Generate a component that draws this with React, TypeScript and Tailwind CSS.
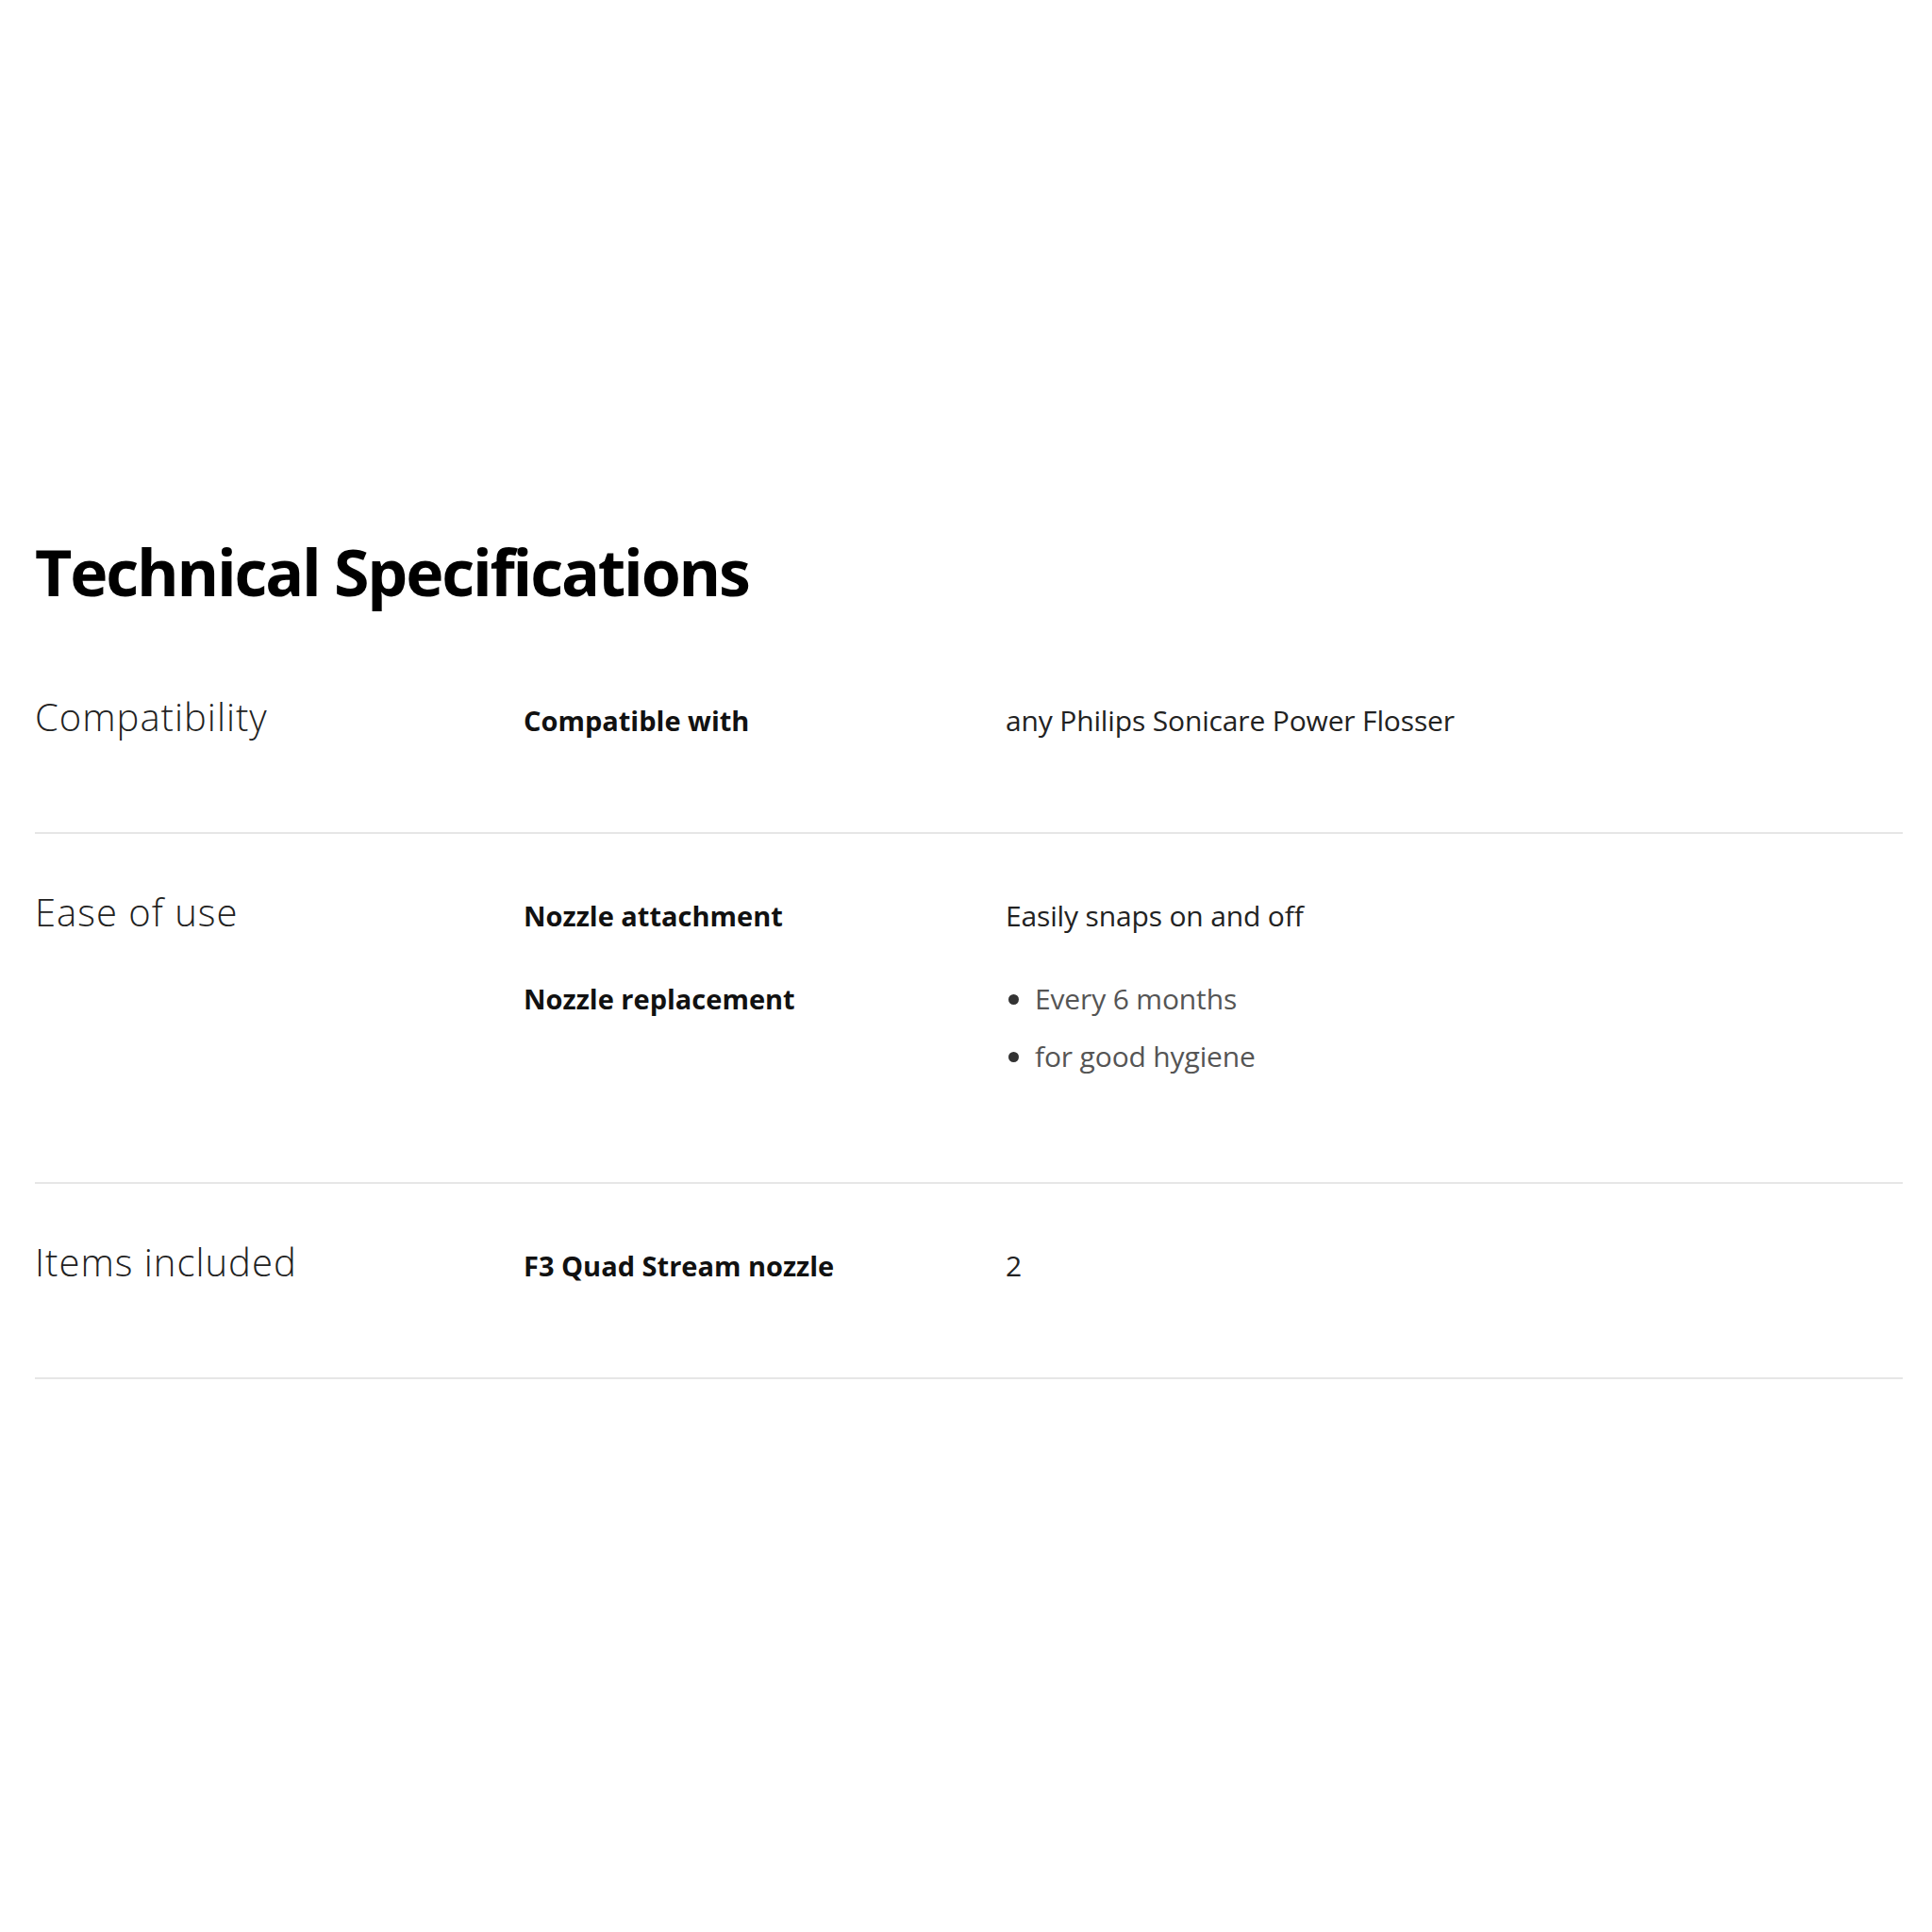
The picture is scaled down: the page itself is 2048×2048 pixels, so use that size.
type Pair = { key: string; value?: string; bullets?: string[] };
type Section = { title: string; pairs: Pair[] };

const sections: Section[] = [
  {
    title: 'Compatibility',
    pairs: [{ key: 'Compatible with', value: 'any Philips Sonicare Power Flosser' }],
  },
  {
    title: 'Ease of use',
    pairs: [
      { key: 'Nozzle attachment', value: 'Easily snaps on and off' },
      { key: 'Nozzle replacement', bullets: ['Every 6 months', 'for good hygiene'] },
    ],
  },
  {
    title: 'Items included',
    pairs: [{ key: 'F3 Quad Stream nozzle', value: '2' }],
  },
];

const SpecRow = ({ section }: { section: Section }) => (
  <div className="flex items-baseline pt-[55px] pb-[94px] border-b-2 border-[#e6e6e6]">
    <h3 className="w-[518px] shrink-0 text-[40px] leading-[56px] font-light text-[#222] tracking-[1px]">
      {section.title}
    </h3>
    <div className="flex flex-col gap-[44px] flex-1">
      {section.pairs.map((p) => (
        <div key={p.key} className="flex items-baseline">
          <div className="w-[511px] shrink-0 text-[29px] leading-[44px] font-bold text-[#111] tracking-[0px]">
            {p.key}
          </div>
          {p.value && (
            <div className="flex-1 text-[30px] leading-[44px] text-[#222] tracking-[-0.15px]">{p.value}</div>
          )}
          {p.bullets && (
            <ul className="flex-1">
              {p.bullets.map((b) => (
                <li key={b} className="block mb-[17px] text-[30px] leading-[44px] text-[#555] tracking-[-0.15px]">
                  <span className="inline-block align-middle ml-[3px] mr-[17px] mb-[4px] w-[11px] h-[11px] rounded-full bg-[#333]" />
                  {b}
                </li>
              ))}
            </ul>
          )}
        </div>
      ))}
    </div>
  </div>
);

export default function App() {
  return (
    <div className="min-h-screen bg-white font-['Open_Sans',sans-serif] pl-[37px] pr-[31px] pt-[565px]">
      <h2 className="text-[68px] leading-[82px] font-bold text-black tracking-[-2.2px] mb-[30px]">
        Technical Specifications
      </h2>
      <div>
        {sections.map((s) => (
          <SpecRow key={s.title} section={s} />
        ))}
      </div>
    </div>
  );
}
